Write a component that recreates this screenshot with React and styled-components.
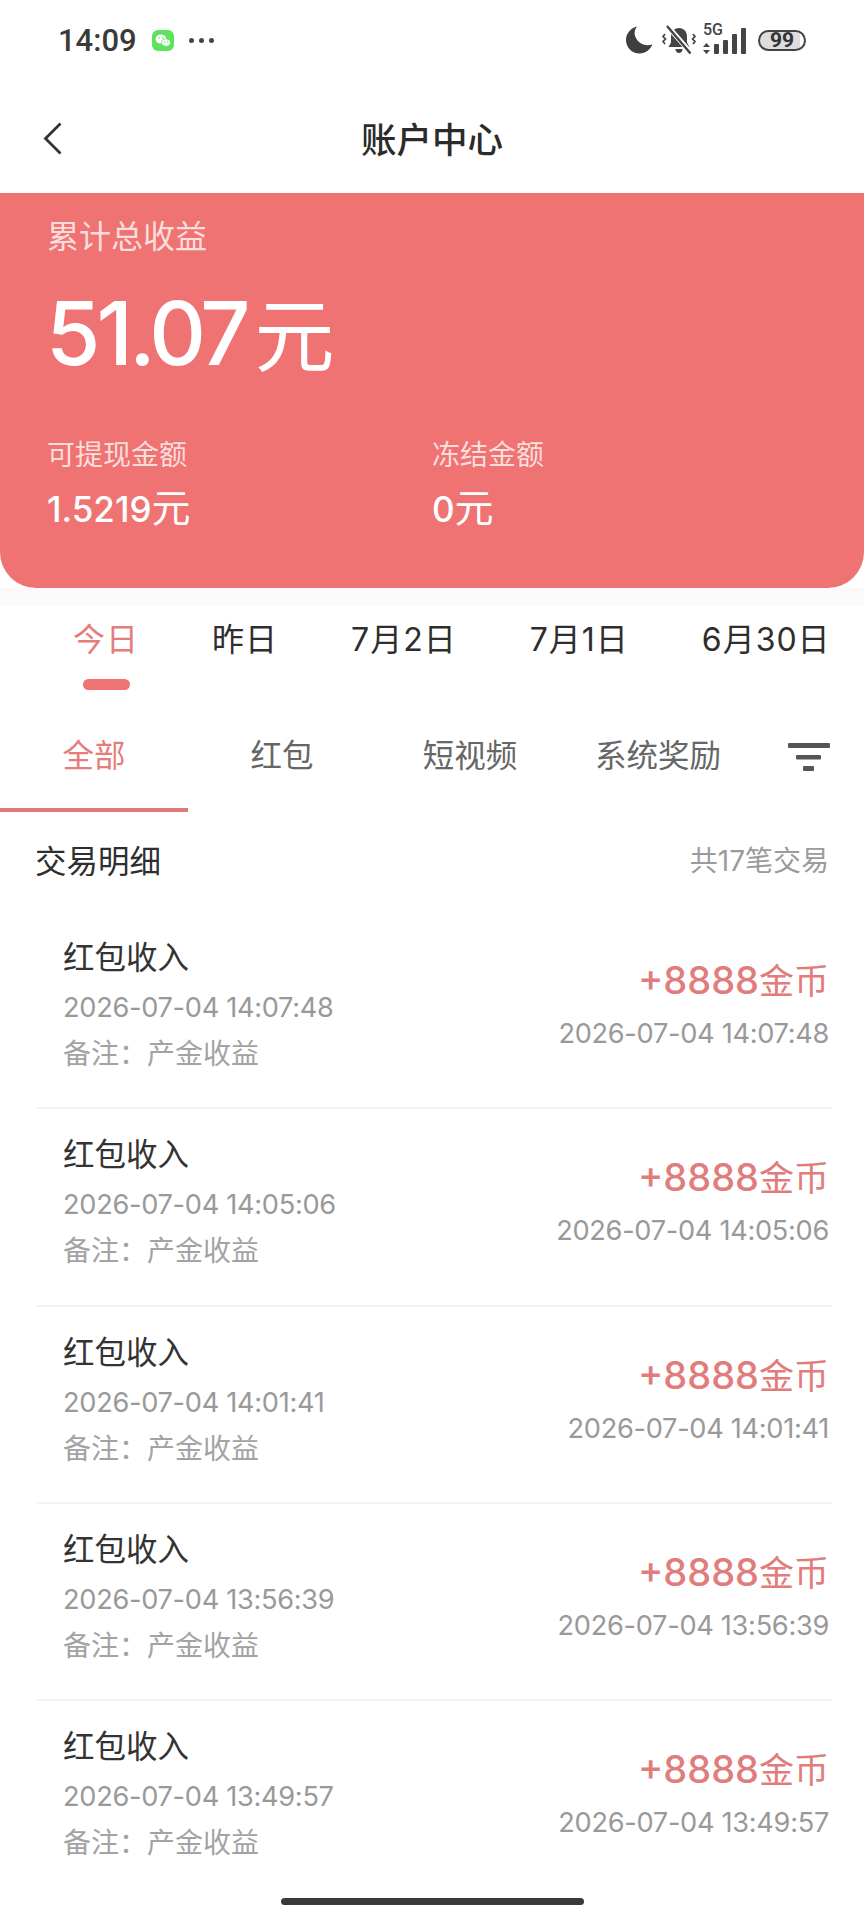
import React from 'react';
import styled, { createGlobalStyle } from 'styled-components';

const dates = ['今日', '昨日', '7月2日', '7月1日', '6月30日'];
const kinds = ['全部', '红包', '短视频', '系统奖励'];
const rows = [
  '2026-07-04 14:07:48',
  '2026-07-04 14:05:06',
  '2026-07-04 14:01:41',
  '2026-07-04 13:56:39',
  '2026-07-04 13:49:57',
];

const App = () => {
  return (
    <Page>
      <GlobalStyle />
      <StatusBar>
        <StatusLeft>
          <Clock>14:09</Clock>
          <WeChatIcon />
          <Dots><i /><i /><i /></Dots>
        </StatusLeft>
        <StatusRight>
          <MoonIcon />
          <BellOffIcon />
          <Signal>
            <FiveG>5G</FiveG>
            <SignalBars />
          </Signal>
          <Battery>99</Battery>
        </StatusRight>
      </StatusBar>

      <Header>
        <BackIcon />
        <Title>账户中心</Title>
      </Header>

      <Card>
        <CardLabel>累计总收益</CardLabel>
        <Total>51.07<TotalUnit>元</TotalUnit></Total>
        <Stats>
          <div>
            <StatLabel>可提现金额</StatLabel>
            <StatValue>1.5219<StatUnit>元</StatUnit></StatValue>
          </div>
          <div>
            <StatLabel>冻结金额</StatLabel>
            <StatValue>0<StatUnit>元</StatUnit></StatValue>
          </div>
        </Stats>
      </Card>

      <Strip />
      <DateTabs>
        {dates.map((d, i) => (
          <DateTab key={d}>
            <DateText $active={i === 0}>{d}</DateText>
            <DateMark $active={i === 0} />
          </DateTab>
        ))}
      </DateTabs>

      <KindTabs>
        {kinds.map((k, i) => (
          <KindTab key={k} $active={i === 0}>{k}</KindTab>
        ))}
        <FilterIcon />
      </KindTabs>

      <SectionHead>
        <SectionTitle>交易明细</SectionTitle>
        <SectionCount>共17笔交易</SectionCount>
      </SectionHead>

      <List>
        {rows.map((time) => (
          <Row key={time}>
            <RowLeft>
              <RowTitle>红包收入</RowTitle>
              <RowTime>{time}</RowTime>
              <RowNote>备注：产金收益</RowNote>
            </RowLeft>
            <RowRight>
              <RowAmount>+8888<AmountUnit>金币</AmountUnit></RowAmount>
              <RowTimeRight>{time}</RowTimeRight>
            </RowRight>
          </Row>
        ))}
      </List>

      <HomeBar />
    </Page>
  );
};

function WeChatIcon() {
  return (
    <svg width="22" height="21" viewBox="0 0 22 21">
      <rect width="22" height="21" rx="6" fill="#5ee35c" />
      <ellipse cx="9" cy="9" rx="5.4" ry="4.6" fill="#fff" />
      <ellipse cx="14" cy="12.6" rx="4.4" ry="3.7" fill="#fff" stroke="#5ee35c" strokeWidth="0.8" />
      <circle cx="7.2" cy="8" r="0.8" fill="#5ee35c" />
      <circle cx="10.6" cy="8" r="0.8" fill="#5ee35c" />
      <circle cx="12.6" cy="12" r="0.7" fill="#5ee35c" />
      <circle cx="15.6" cy="12" r="0.7" fill="#5ee35c" />
    </svg>
  );
}

function MoonIcon() {
  return (
    <svg width="27" height="28" viewBox="0 0 27 28">
      <path d="M11 0.500C4.600 2 0 7.500 0 14c0 7.600 6 13.500 13.400 13.500 6 0 11-3.700 13-9.200-1.600.6-3 .9-4.600.9C15.500 19.200 10 14.500 8.800 9 8.200 5.800 9 3 11 .5z" fill="#3f3f3f" />
    </svg>
  );
}

function BellOffIcon() {
  return (
    <svg width="34" height="31" viewBox="0 0 34 31" fill="none">
      <path d="M17 3c-5 0-8 3.600-8 8.500v6L6.500 22h21L25 17.500v-6C25 6.600 22 3 17 3z" fill="#444" />
      <path d="M13.500 24h7c0 2.500-1.500 4-3.500 4s-3.500-1.500-3.500-4z" fill="#444" />
      <path d="M5 0.500 29 28" stroke="#fff" strokeWidth="5" />
      <path d="M5 1 28.500 28.500" stroke="#444" strokeWidth="2.400" />
      <path d="M3 9 1 11.500l2.500 2.500L1 16.500 3 19M31 9l2 2.500-2.500 2.500 2.500 2.500-2 2.500" stroke="#444" strokeWidth="1.700" />
    </svg>
  );
}

function SignalBars() {
  return (
    <svg width="44" height="27" viewBox="0 0 44 27">
      <path d="M3.500 16 7 20H0zM3.500 27 0 23h7z" fill="#444" />
      <rect x="11" y="17" width="5" height="10" rx="1" fill="#444" />
      <rect x="20" y="13" width="5" height="14" rx="1" fill="#444" />
      <rect x="29" y="7" width="5" height="20" rx="1" fill="#444" />
      <rect x="38" y="1" width="5" height="26" rx="1" fill="#444" />
    </svg>
  );
}

function BackIcon() {
  return (
    <BackSvg width="20" height="33" viewBox="0 0 20 33" fill="none">
      <path d="M17.500 1.500 2.500 16.500l15 15" stroke="#333" strokeWidth="2.800" />
    </BackSvg>
  );
}

function FilterIcon() {
  return (
    <FilterSvg width="42" height="28" viewBox="0 0 42 28">
      <rect x="0" y="0" width="42" height="5" rx="1" fill="#555" />
      <rect x="8" y="12" width="25" height="4.500" rx="1" fill="#555" />
      <rect x="15" y="23" width="11" height="5" rx="1" fill="#555" />
    </FilterSvg>
  );
}

export default App;

const GlobalStyle = createGlobalStyle`
  html, body {
    margin: 0;
    padding: 0;
    background: #fff;
  }
  body {
    font-family: Inter, "Noto Sans CJK SC", sans-serif;
    overflow: hidden;
  }
`;

const Page = styled.div`
  position: relative;
  width: 864px;
  height: 1920px;
  overflow: hidden;
  background: #fff;
  display: flex;
  flex-direction: column;
`;

const StatusBar = styled.div`
  box-sizing: border-box;
  height: 80px;
  padding: 0 58px 0 58px;
  display: flex;
  align-items: center;
  justify-content: space-between;
`;

const StatusLeft = styled.div`
  display: flex;
  align-items: center;
`;

const Clock = styled.span`
  font-family: Roboto, sans-serif;
  font-size: 31px;
  font-weight: 500;
  color: #3a3a3a;
  margin-right: 15px;
`;

const Dots = styled.span`
  display: flex;
  gap: 5px;
  margin-left: 15px;

  i {
    width: 5px;
    height: 5px;
    border-radius: 50%;
    background: #444;
  }
`;

const StatusRight = styled.div`
  display: flex;
  align-items: center;
  gap: 9px;
`;

const Signal = styled.div`
  position: relative;
  height: 27px;
  margin-left: -2px;
`;

const FiveG = styled.span`
  position: absolute;
  left: 0;
  top: -5px;
  font-family: Roboto, sans-serif;
  font-size: 16px;
  font-weight: 500;
  line-height: 16px;
  color: #444;
`;

const Battery = styled.div`
  box-sizing: border-box;
  width: 48px;
  height: 21px;
  margin-left: 2px;
  border: 2.5px solid #444;
  border-radius: 11px;
  background: linear-gradient(90deg, #ddd 92%, #fff 92%);
  font-family: Roboto, sans-serif;
  font-size: 21px;
  font-weight: 700;
  line-height: 16px;
  text-align: center;
  color: #333;
`;

const Header = styled.div`
  position: relative;
  height: 113px;
  padding-top: 2px;
  box-sizing: border-box;
  display: flex;
  align-items: center;
  justify-content: center;
`;

const BackSvg = styled.svg`
  position: absolute;
  left: 43px;
  top: 42px;
`;

const Title = styled.h1`
  margin: 0;
  font-size: 35.500px;
  font-weight: 500;
  color: #2b2b2b;
`;

const Card = styled.section`
  box-sizing: border-box;
  height: 395px;
  padding: 22px 48px 0;
  background: #ee7372;
  border-radius: 0 0 36px 36px;
  color: #fff;
`;

const CardLabel = styled.div`
  font-size: 32px;
  line-height: 44px;
  margin-left: -1px;
  color: #fbdddc;
`;

const Total = styled.div`
  margin: 24px 0 0 -2px;
  height: 100px;
  font-size: 88px;
  line-height: 100px;
  letter-spacing: -4px;
  font-weight: 500;
`;

const TotalUnit = styled.span`
  font-size: 80px;
  font-weight: 400;
  letter-spacing: 0;
  margin-left: 8px;
`;

const Stats = styled.div`
  margin-top: 52px;
  display: grid;
  grid-template-columns: 385px 1fr;
`;

const StatLabel = styled.div`
  font-size: 28px;
  line-height: 40px;
  margin-left: -1px;
  color: #fbdddc;
`;

const StatValue = styled.div`
  margin: 11px 0 0 -1px;
  font-size: 35px;
  font-weight: 500;
  line-height: 44px;
`;

const StatUnit = styled.span`
  font-size: 39px;
  font-weight: 400;
`;

const Strip = styled.div`
  height: 18px;
  background: #fafafa;
`;

const DateTabs = styled.div`
  box-sizing: border-box;
  height: 106px;
  padding: 12px 0 0 73px;
  display: flex;
  gap: 73px;
`;

const DateTab = styled.div`
  display: flex;
  flex-direction: column;
  align-items: center;
`;

const DateText = styled.div`
  font-size: 32px;
  letter-spacing: 1px;
  line-height: 44px;
  white-space: nowrap;
  color: ${(p) => (p.$active ? '#e47d7c' : '#2e2e2e')};
`;

const DateMark = styled.div`
  width: 47px;
  height: 11px;
  margin-top: 17px;
  border-radius: 6px;
  background: ${(p) => (p.$active ? '#ee7372' : 'transparent')};
`;

const KindTabs = styled.div`
  position: relative;
  height: 100px;
  display: flex;
`;

const KindTab = styled.div`
  box-sizing: border-box;
  width: 188px;
  height: 100px;
  padding-top: 22px;
  text-align: center;
  font-size: 31.500px;
  line-height: 44px;
  color: ${(p) => (p.$active ? '#e47d7c' : '#666')};
  border-bottom: 4px solid ${(p) => (p.$active ? '#e07b79' : 'transparent')};
`;

const FilterSvg = styled.svg`
  margin: 31px 0 0 36px;
`;

const SectionHead = styled.div`
  box-sizing: border-box;
  height: 100px;
  padding: 0 35px 6px 35px;
  display: flex;
  align-items: center;
  justify-content: space-between;
`;

const SectionTitle = styled.div`
  font-size: 31.500px;
  color: #2e2e2e;
`;

const SectionCount = styled.div`
  font-size: 28px;
  color: #9b9b9b;
`;

const List = styled.div`
  margin: 0 32px 0 37px;
`;

const Row = styled.div`
  box-sizing: border-box;
  height: 197.300px;
  padding: 24px 0 0 26px;
  display: flex;
  justify-content: space-between;
  align-items: flex-start;
  border-bottom: 2px solid #f3f3f3;

  &:last-child {
    border-bottom: 0;
  }
`;

const RowLeft = styled.div`
  display: flex;
  flex-direction: column;
`;

const RowTitle = styled.div`
  font-size: 31.500px;
  line-height: 44px;
  margin-bottom: 6px;
  color: #333;
`;

const RowTime = styled.div`
  font-size: 27.200px;
  line-height: 44px;
  letter-spacing: -0.300px;
  color: #999;
`;

const RowNote = styled.div`
  font-size: 28px;
  line-height: 44px;
  margin-top: 2px;
  color: #a3a3a3;
`;

const RowRight = styled.div`
  display: flex;
  flex-direction: column;
  align-items: flex-end;
  margin-top: 21px;
  padding-right: 3px;
`;

const RowAmount = styled.div`
  font-size: 38px;
  font-weight: 500;
  line-height: 46px;
  color: #e17c7c;
`;

const AmountUnit = styled.span`
  font-size: 35px;
  font-weight: 400;
`;

const RowTimeRight = styled(RowTime)`
  margin-top: 8px;
`;

const HomeBar = styled.div`
  position: absolute;
  left: 281px;
  bottom: 15px;
  width: 303px;
  height: 7px;
  border-radius: 4px;
  background: #3a3a3a;
`;
